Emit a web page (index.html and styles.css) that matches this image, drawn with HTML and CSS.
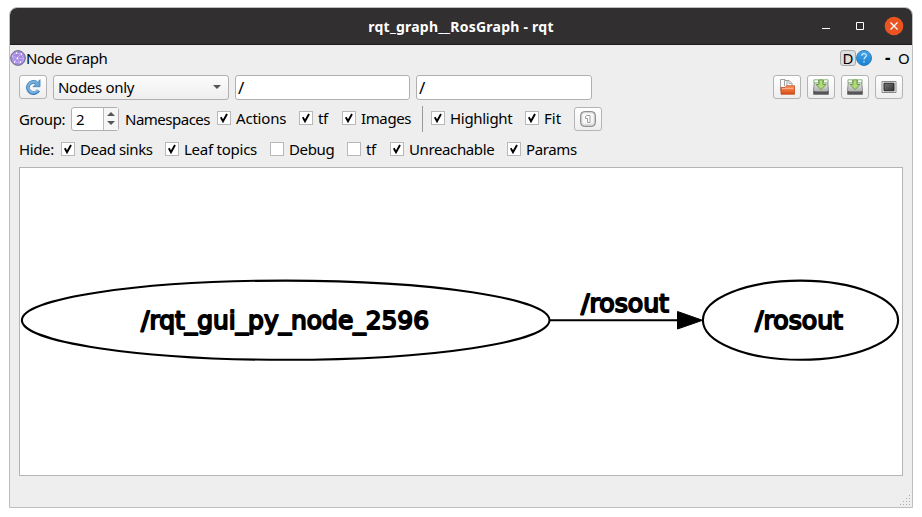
FILE: index.html
```html
<!DOCTYPE html>
<html lang="en">
<head>
<meta charset="utf-8">
<title>rqt_graph__RosGraph - rqt</title>
<link rel="stylesheet" href="styles.css">
</head>
<body>
<svg class="defs" width="0" height="0" aria-hidden="true">
  <defs>
    <linearGradient id="orange" x2="0" y2="1"><stop offset="0" stop-color="#ff9a62"/><stop offset="1" stop-color="#d94a14"/></linearGradient>
    <linearGradient id="steel" x2="0" y2="1"><stop offset="0" stop-color="#f8f8f8"/><stop offset="1" stop-color="#999"/></linearGradient>
    <linearGradient id="dark" x2="1" y2="1"><stop offset="0" stop-color="#777"/><stop offset="1" stop-color="#333"/></linearGradient>
    <linearGradient id="blue" x2="0" y2="1"><stop offset="0" stop-color="#4aa5e8"/><stop offset="1" stop-color="#1681d2"/></linearGradient>
  </defs>
  <symbol id="save" viewBox="0 0 16 16">
    <path d="M1.500 1.500h13l1 10v3.900H.5v-3.900z" fill="url(#steel)" stroke="#777" stroke-width=".8"/>
    <path d="M.7 12h14.600v3.200H.7z" fill="#555"/><path d="M2 12.200h12" stroke="#bbb" stroke-width=".6"/>
    <path d="M1 .8h4.500v3H1zM10.500.8H15v3h-4.500z" fill="#fff" stroke="#70a060" stroke-width=".8"/>
    <path d="M6 .8h4v4.700h3L8 10.600 3 5.500h3z" fill="#b4d97a" stroke="#5d983b" stroke-width=".9"/>
  </symbol>
  <symbol id="tick" viewBox="0 0 12 12"><path d="M2.800 5.300 5 9.200 9 2" fill="none" stroke="#000" stroke-width="1.900"/></symbol>
</svg>
<main class="window">
  <header class="titlebar">
    <h1>rqt_graph__RosGraph - rqt</h1>
    <svg class="controls" width="92" height="24" viewBox="0 0 92 24">
      <path d="M2 14.500h8" stroke="#fff"/>
      <path d="M36.500 8.500h7v7h-7z" fill="none" stroke="#fff"/>
      <circle cx="74" cy="12" r="9.300" fill="#e95420"/>
      <path d="m70.500 8.500 7 7m0-7-7 7" stroke="#fff" stroke-width="1.300"/>
    </svg>
  </header>
  <div class="dock-title">
    <svg width="16" height="16" viewBox="0 0 16 16"><circle cx="8" cy="8" r="7.400" fill="#a488e0" stroke="#75718a"/><path d="m2 6 4-3 5 1 3 5-4 4-5-1-3-6 5 2 4-4m-4 4 3 5m-3-5-2 4m2-4 7 1" fill="none" stroke="#d3c4f5" stroke-width=".7"/><path d="M6 3h1M11 4h1M7 8h1M10 12h1M4 12h1" stroke="#fff" stroke-width="1.500"/></svg>
    <span class="dock-name">Node Graph</span>
    <span class="dock-d">D</span>
    <svg width="16" height="16" viewBox="0 0 16 16"><circle cx="8" cy="8" r="7.500" fill="url(#blue)" stroke="#3280b8"/><path d="M5.700 5.800c0-3 4.800-2.800 4.600-.2C10.200 7.300 8 7.300 8 9.400M8 11v1.400" fill="none" stroke="#d5f1ff" stroke-width="1.200"/></svg>
    <span class="dock-min">-</span><span class="dock-close">O</span>
  </div>
  <div class="toolbar">
    <button class="btn"><svg width="16" height="16" viewBox="0 0 16 16"><path d="M13.400 11.300A5.600 5.600 0 1 1 11.500 3.800" fill="none" stroke="#3f7fb8" stroke-width="3.700"/><path d="M15 .7v7H8z" fill="#6ca6d8" stroke="#3f7fb8" stroke-width=".8"/><path d="M13 11.200A5.400 5.400 0 1 1 12 4" fill="none" stroke="#78b0de" stroke-width="2.300"/></svg></button>
    <div class="combo"><span>Nodes only</span><i class="down"></i></div>
    <div class="field">/</div>
    <div class="field wide">/</div>
    <div class="actions">
      <button class="btn"><svg width="16" height="16" viewBox="0 0 16 16"><path d="M1.500 12V.5H6l2 2V12M5.500 7V1.500H10L13 4.500V9" fill="#fafafa" stroke="#8a8a8a" stroke-width=".8"/><path d="M10 1.500v3h3" fill="none" stroke="#999" stroke-width=".7"/><path d="M2 15.200V8.500h4l1.500-1.700h8v8.400z" fill="url(#orange)" stroke="#c4481a" stroke-width=".8"/><path d="M3 9.500h11.500" stroke="#ffc2a0" stroke-width=".7"/></svg></button>
      <button class="btn"><svg width="16" height="16"><use href="#save"/></svg></button>
      <button class="btn"><svg width="16" height="16"><use href="#save"/></svg></button>
      <button class="btn"><svg width="16" height="16" viewBox="0 0 16 16"><path d="M1 2.500h14v11H1z" fill="#f2f2f2" stroke="#888"/><path d="M3 4.200h10v7.600H3z" fill="url(#dark)" stroke="#222"/></svg></button>
    </div>
  </div>
  <div class="options">
    <span class="group">Group:</span>
    <div class="spin"><span>2</span><div class="steps"><i class="up"></i><i class="down"></i></div></div>
    <span class="namespaces">Namespaces</span>
    <label class="check actions-c"><svg class="box"><use href="#tick"/></svg><span>Actions</span></label>
    <label class="check tf-c"><svg class="box"><use href="#tick"/></svg><span>tf</span></label>
    <label class="check images-c"><svg class="box"><use href="#tick"/></svg><span>Images</span></label>
    <div class="separator"></div>
    <label class="check highlight-c"><svg class="box"><use href="#tick"/></svg><span>Highlight</span></label>
    <label class="check fit-c"><svg class="box"><use href="#tick"/></svg><span>Fit</span></label>
    <button class="btn"><svg width="16" height="16" viewBox="0 0 16 16"><rect x=".7" y=".7" width="14.600" height="14.600" rx="3.500" fill="#e4e4e4" stroke="#777"/><rect x="2" y="1.800" width="12" height="11.500" rx="2.500" fill="#f8f8f8" stroke="#ccc" stroke-width=".6"/><path d="M5.500 5.500 7 4.500h3v7H7.500v-4h-2z" fill="#fff" stroke="#888" stroke-width=".8"/></svg></button>
  </div>
  <div class="options hide-row">
    <span class="hide">Hide:</span>
    <label class="check dead-c"><svg class="box"><use href="#tick"/></svg><span>Dead sinks</span></label>
    <label class="check leaf-c"><svg class="box"><use href="#tick"/></svg><span>Leaf topics</span></label>
    <label class="check debug-c"><svg class="box"></svg><span>Debug</span></label>
    <label class="check tf-c"><svg class="box"></svg><span>tf</span></label>
    <label class="check unreach-c"><svg class="box"><use href="#tick"/></svg><span>Unreachable</span></label>
    <label class="check params-c"><svg class="box"><use href="#tick"/></svg><span>Params</span></label>
  </div>
  <section class="canvas">
    <svg class="graph" viewBox="20 168 882 307">
      <g fill="none" stroke="#000" stroke-width="2.100">
        <ellipse cx="285.700" cy="320.200" rx="263.800" ry="39.600"/>
        <ellipse cx="800.500" cy="320.200" rx="97.600" ry="39.600"/>
        <path d="M549.500 320.300H680"/>
      </g>
      <path d="M677.500 311.500 702.500 320.300 677.500 329z" stroke="#000"/>
      <g class="names">
        <text x="141" y="329.200" textLength="288" lengthAdjust="spacingAndGlyphs">/rqt_gui_py_node_2596</text>
        <text x="581" y="312.200" textLength="88" lengthAdjust="spacingAndGlyphs">/rosout</text>
        <text x="755" y="329.200" textLength="88" lengthAdjust="spacingAndGlyphs">/rosout</text>
      </g>
    </svg>
  </section>
  <footer class="status"><svg width="12" height="12" viewBox="0 0 12 12"><path d="M10 1.500h1M7 4.500h1m2 0h1M4 7.500h1m2 0h1m2 0h1M1 10.500h1m2 0h1m2 0h1m2 0h1" stroke="#aaa"/></svg></footer>
</main>
</body>
</html>
```
FILE: styles.css
```css
* { box-sizing: border-box; }
body { margin: 0; background: #fff; font: 15px/20px "Noto Sans", sans-serif; color: #000; }
svg { display: block; flex: none; }
.defs { position: absolute; }
.window { width: 904px; height: 501px; margin: 7px 0 0 9px; border: 1px solid #bebebe; border-radius: 8px 8px 0 0; background: #eee; overflow: hidden; display: flex; flex-direction: column; }
.titlebar { height: 37px; flex: none; background: #322f30; border-bottom: 1px solid #1e1c1d; display: grid; grid-template-columns: 1fr auto; align-items: center; padding-left: 92px; }
h1 { margin: 0; padding-top: 1px; color: #fff; font: 700 14px/20px "Noto Sans", sans-serif; text-align: center; letter-spacing: .24px; }
.dock-title { height: 26px; flex: none; display: flex; align-items: center; padding-right: 3px; }
.dock-name { flex: 1; letter-spacing: -.45px; }
.dock-d { width: 16px; height: 16px; border: 1px solid #aaa; border-radius: 3px; background: #dfdfdf; text-align: center; line-height: 14px; }
.dock-min { margin-left: 13px; width: 13px; font-weight: 700; font-size: 17px; }
.dock-close { width: 11px; }
.toolbar { height: 32px; flex: none; display: flex; align-items: center; gap: 6px; padding: 0 9px; }
.btn { flex: none; width: 28px; height: 24px; padding: 0; border: 1px solid #b4b4b4; border-radius: 3px; background: linear-gradient(#fff, #eee); display: grid; place-items: center; }
.combo { width: 176px; height: 25px; border: 1px solid #b0b0b0; border-radius: 3px; background: linear-gradient(#fcfcfc, #eee); display: flex; align-items: center; justify-content: space-between; padding: 0 7px 0 4px; letter-spacing: -.3px; }
.field { width: 175px; height: 25px; border: 1px solid #b0b0b0; border-radius: 3px; background: #fff; padding: 2px 2px; font-size: 17px; }
.wide { width: 176px; }
.actions { display: flex; gap: 6px; margin-left: auto; }
.up, .down { width: 8px; height: 4px; background: #555; clip-path: polygon(0 0, 100% 0, 50% 100%); }
.up { clip-path: polygon(50% 0, 100% 100%, 0 100%); }
.options { height: 31px; flex: none; display: flex; align-items: center; padding-left: 9px; letter-spacing: -.38px; white-space: nowrap; }
.hide-row { height: 30px; }
.group { width: 52px; }
.spin { width: 48px; height: 24px; border: 1px solid #b0b0b0; border-radius: 3px; background: #fff; display: flex; padding-left: 4px; line-height: 22px; margin-right: 6px; }
.steps { margin-left: auto; width: 15px; border-left: 1px solid #bbb; background: #f6f6f6; display: flex; flex-direction: column; align-items: center; justify-content: center; gap: 5px; }
.namespaces { width: 92px; letter-spacing: -.5px; }
.check { flex: none; display: flex; align-items: center; gap: 5px; }
.options:not(.hide-row) .check { padding-bottom: 1px; }
.box { width: 14px; height: 14px; border: 1px solid #b8b8b8; background: #fff; }
.actions-c { width: 82px; letter-spacing: -.2px; }
.tf-c { width: 43px; }
.images-c { width: 80px; }
.separator { width: 9px; height: 26px; border-left: 1px solid #999; }
.highlight-c { width: 94px; letter-spacing: -.3px; }
.fit-c { width: 49px; letter-spacing: 0; }
.hide { width: 42px; }
.dead-c { width: 104px; }
.leaf-c { width: 105px; letter-spacing: -.25px; }
.debug-c { width: 77px; }
.unreach-c { width: 117px; }
.canvas { width: 884px; height: 309px; flex: none; margin: 3px 0 0 9px; border: 1px solid #b4b4b4; background: #fff; }
.graph { width: 882px; height: 307px; }
.names { font: 25.5px "DejaVu Sans", sans-serif; stroke: #000; stroke-width: 1.9px; stroke-linejoin: round; }
.status { flex: 1; display: flex; justify-content: flex-end; align-items: flex-end; padding: 0 1px 1px 0; }
```
